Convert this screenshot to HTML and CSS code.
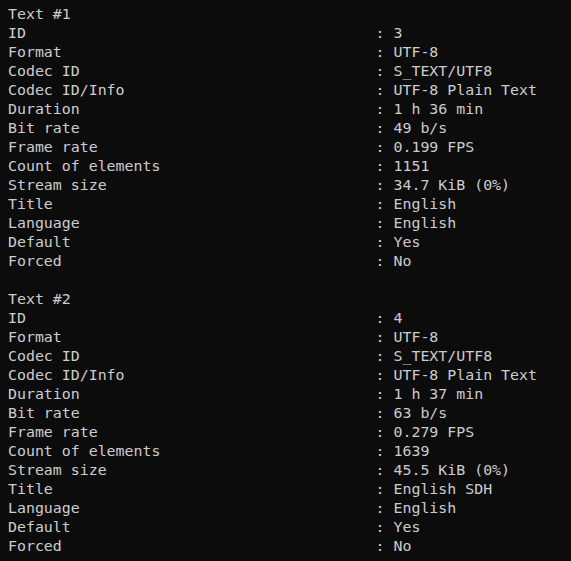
FILE: index.html
```html
<!DOCTYPE html>
<html>
<head>
<meta charset="utf-8">
<link rel="stylesheet" href="styles.css">
</head>
<body>
<pre class="term">Text #1
ID                                       : 3
Format                                   : UTF-8
Codec ID                                 : S_TEXT/UTF8
Codec ID/Info                            : UTF-8 Plain Text
Duration                                 : 1 h 36 min
Bit rate                                 : 49 b/s
Frame rate                               : 0.199 FPS
Count of elements                        : 1151
Stream size                              : 34.7 KiB (0%)
Title                                    : English
Language                                 : English
Default                                  : Yes
Forced                                   : No

Text #2
ID                                       : 4
Format                                   : UTF-8
Codec ID                                 : S_TEXT/UTF8
Codec ID/Info                            : UTF-8 Plain Text
Duration                                 : 1 h 37 min
Bit rate                                 : 63 b/s
Frame rate                               : 0.279 FPS
Count of elements                        : 1639
Stream size                              : 45.5 KiB (0%)
Title                                    : English SDH
Language                                 : English
Default                                  : Yes
Forced                                   : No</pre>
</body>
</html>
```
FILE: styles.css
```css
html, body {
  margin: 0;
  padding: 0;
  background: #0c0c0c;
  height: 100%;
}
.term {
  margin: 0;
  padding: 5px 0 0 8px;
  font-family: "DejaVu Sans Mono", monospace;
  font-size: 14.9px;
  line-height: 19px;
  color: #cccccc;
  white-space: pre;
}
```
